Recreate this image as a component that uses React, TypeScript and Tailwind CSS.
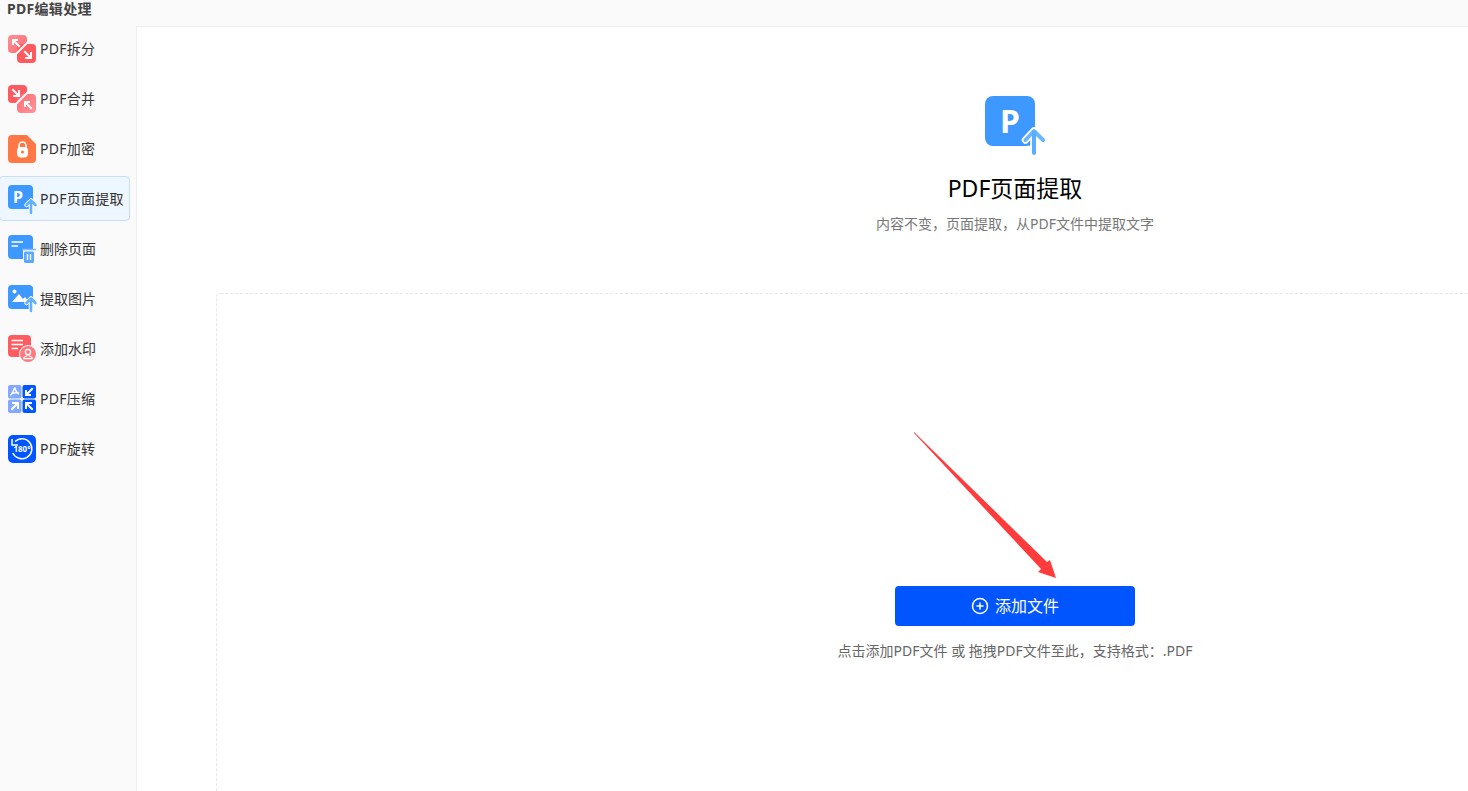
import { CirclePlus } from "lucide-react"
import type { ReactNode } from "react"

// Small corner arrow used by the split / merge / compress tiles
const CornerArrow = ({ d }: { d: string }) => (
  <path d={d} fill="none" stroke="#fff" strokeWidth="2" strokeLinecap="square" />
)

const UpArrow = ({ x, y }: { x: number; y: number }) => (
  <g transform={`translate(${x} ${y})`} fill="none" strokeLinecap="round" strokeLinejoin="round">
    <path d="M-4.5 5L0 0.5L4.5 5M0 1V13" stroke="#fff" strokeWidth="4.5" />
    <path d="M-4.5 5L0 0.5L4.5 5M0 1V13" stroke="#5fb0ff" strokeWidth="2.6" />
  </g>
)

const Svg = ({ children }: { children: ReactNode }) => (
  <svg width="28" height="28" viewBox="0 0 28 28" className="shrink-0 overflow-visible">
    {children}
  </svg>
)

const SplitIcon = () => (
  <Svg>
    <defs>
      <linearGradient id="splitA" x1="0" y1="0" x2="1" y2="1">
        <stop offset="0" stopColor="#ff8f98" />
        <stop offset="1" stopColor="#ff6a70" />
      </linearGradient>
    </defs>
    <rect x="0" y="0" width="19" height="18" rx="4" fill="url(#splitA)" />
    <rect x="9" y="9" width="19" height="19" rx="4" fill="#ff5a60" />
    <path d="M20 7L7 20" stroke="#fbfbfb" strokeWidth="2" />
    <CornerArrow d="M5 9V5H9M5.5 5.5L11 11" />
    <CornerArrow d="M23 18V23H18M22.5 22.5L17 17" />
  </Svg>
)

const MergeIcon = () => (
  <Svg>
    <defs>
      <linearGradient id="mergeA" x1="0" y1="0" x2="1" y2="1">
        <stop offset="0" stopColor="#ff6a70" />
        <stop offset="1" stopColor="#ff959c" />
      </linearGradient>
    </defs>
    <rect x="0" y="0" width="19" height="18" rx="4" fill="#ff5a60" />
    <rect x="9" y="9" width="19" height="19" rx="4" fill="url(#mergeA)" />
    <path d="M20 7L7 20" stroke="#fbfbfb" strokeWidth="2" />
    <CornerArrow d="M11 6V11H6M10.5 10.5L5 5" />
    <CornerArrow d="M17 21V17H21M17.5 17.5L23 23" />
  </Svg>
)

const LockIcon = () => (
  <Svg>
    <path d="M4 0H19L28 9V24a4 4 0 0 1-4 4H4a4 4 0 0 1-4-4V4a4 4 0 0 1 4-4z" fill="#ff7845" />
    <path d="M11 13V10.5a3.5 3.5 0 0 1 7 0V13" fill="none" stroke="#fff" strokeWidth="1.6" />
    <rect x="9" y="12" width="11" height="10.5" rx="4" fill="#fff" />
    <circle cx="14.5" cy="17" r="1.6" fill="#ff7845" />
  </Svg>
)

const PageUpIcon = () => (
  <Svg>
    <rect x="0" y="0" width="25" height="24" rx="4" fill="#3d98ff" />
    <text x="5" y="18" fontSize="16" fontWeight="700" fill="#fff" fontFamily="Noto Sans">
      P
    </text>
    <UpArrow x={23} y={15} />
  </Svg>
)

const DeleteIcon = () => (
  <Svg>
    <rect x="0" y="0" width="25" height="24" rx="4" fill="#3d98ff" />
    <path d="M3.5 7H15M3.5 11H10" stroke="#fff" strokeWidth="1.6" />
    <rect x="15" y="14" width="12" height="15" rx="2" fill="#fff" />
    <path d="M14 14.5H28" stroke="#7cbcff" strokeWidth="1.6" />
    <rect x="16" y="16.5" width="10" height="11.5" rx="1.5" fill="#5aa9ff" />
    <path d="M19.5 19V25M22.5 19V25" stroke="#fff" strokeWidth="1.4" />
  </Svg>
)

const ImageIcon = () => (
  <Svg>
    <rect x="0" y="0" width="25" height="24" rx="4" fill="#3d98ff" />
    <circle cx="6.5" cy="6.5" r="2" fill="#fff" />
    <path d="M4 17L11 9L15 14L17 12L21 17z" fill="#fff" />
    <UpArrow x={23} y={13} />
  </Svg>
)

const WatermarkIcon = () => (
  <Svg>
    <rect x="0" y="0" width="23" height="22" rx="4" fill="#ff5c62" />
    <path d="M3.5 5.5H15M3.5 9.5H15M3.5 13.5H10" stroke="#fff" strokeWidth="1.6" />
    <circle cx="20" cy="19" r="9" fill="#fff" />
    <circle cx="20" cy="19" r="8" fill="#ff7a80" />
    <circle cx="20" cy="17" r="2.6" fill="none" stroke="#fff" strokeWidth="1.3" />
    <path d="M18.8 19.5V21L15.8 22.6V23.6H24.2V22.6L21.2 21V19.5" fill="none" stroke="#fff" strokeWidth="1.1" />
  </Svg>
)

const CompressIcon = () => (
  <Svg>
    <rect x="0" y="0" width="13.5" height="13.5" rx="2" fill="#82a9ff" />
    <rect x="14.5" y="0" width="13.5" height="13.5" rx="2" fill="#0055ff" />
    <rect x="0" y="14.5" width="13.5" height="13.5" rx="2" fill="#82a9ff" />
    <rect x="14.5" y="14.5" width="13.5" height="13.5" rx="2" fill="#0055ff" />
    <path d="M6.8 2.5C5.8 5 5 8 2.5 10.5M6.8 2.5C7.5 6 9 8 11 9M3 8.5C6 7.5 8 7.5 11 8" fill="none" stroke="#fff" strokeWidth="1.4" />
    <CornerArrow d="M18 6V10H22M18.5 9.5L24 4" />
    <CornerArrow d="M5 18H10V23M9.5 18.5L4 24" />
    <CornerArrow d="M18 23V18H23M18.5 18.5L24 24" />
  </Svg>
)

const RotateIcon = () => (
  <Svg>
    <rect x="0" y="0" width="28" height="28" rx="5" fill="#0055ff" />
    <path d="M7 6.5A10 10 0 1 1 4.8 18" fill="none" stroke="#fff" strokeWidth="1.5" />
    <path d="M4 4V10H10" fill="none" stroke="#fff" strokeWidth="1.5" />
    <text x="14" y="17" textAnchor="middle" fontSize="8" fontWeight="700" fill="#fff" fontFamily="Noto Sans">
      180°
    </text>
  </Svg>
)

const menuItems = [
  { label: "PDF拆分", icon: <SplitIcon /> },
  { label: "PDF合并", icon: <MergeIcon /> },
  { label: "PDF加密", icon: <LockIcon /> },
  { label: "PDF页面提取", icon: <PageUpIcon />, active: true },
  { label: "删除页面", icon: <DeleteIcon /> },
  { label: "提取图片", icon: <ImageIcon /> },
  { label: "添加水印", icon: <WatermarkIcon /> },
  { label: "PDF压缩", icon: <CompressIcon /> },
  { label: "PDF旋转", icon: <RotateIcon /> },
]

export default function App() {
  return (
    <div
      lang="zh-CN"
      className="flex h-screen overflow-hidden bg-[#fafafa] font-['Noto_Sans','Noto_Sans_CJK_SC',sans-serif] text-[#333]"
    >
      {/* Sidebar */}
      <aside className="w-[136px] shrink-0">
        <div className="h-[24px] pl-[7px] text-sm font-bold leading-[18px] tracking-[0.3px] text-[#444]">PDF编辑处理</div>
        <nav className="flex flex-col">
          {menuItems.map((item) => (
            <div
              key={item.label}
              className={
                item.active
                  ? "mt-[2px] mb-[3px] -ml-px flex h-[45px] w-[131px] items-center gap-1 rounded-sm border border-[#c6dfff] bg-[#eef6ff] pl-[8px] text-sm"
                  : "mt-[2px] mb-[3px] -ml-px flex h-[45px] w-[131px] items-center gap-1 border border-transparent pl-[8px] text-sm"
              }
            >
              {item.icon}
              <span className={item.label.startsWith("PDF") ? "tracking-[0.25px]" : ""}>{item.label}</span>
            </div>
          ))}
        </nav>
      </aside>

      {/* Main panel, wider than the window */}
      <div className="h-full w-[1757px] shrink-0 pt-[26px]">
        <main className="flex h-[900px] flex-col items-center border-t border-l border-[#eeeeee] bg-white px-[79px] pt-[69px]">
          <svg width="60" height="60" viewBox="0 0 60 60" className="shrink-0">
            <rect x="0" y="0" width="50" height="50" rx="8" fill="#3d98ff" />
            <text x="15" y="37" fontSize="32" fontWeight="700" fill="#fff" fontFamily="Noto Sans">
              P
            </text>
            <g fill="none" strokeLinecap="round" strokeLinejoin="round">
              <path d="M40.5 44L49 35L58 44M49 36V57" stroke="#fff" strokeWidth="7.5" />
              <path d="M40.5 44L49 35L58 44" stroke="#6ab6ff" strokeWidth="4" />
              <path d="M49 36V57" stroke="#5aaeff" strokeWidth="4" />
            </g>
          </svg>
          <h1 className="mt-[15px] h-[34px] text-[23px] leading-[34px] text-black">PDF页面提取</h1>
          <p className="mt-[9px] h-5 text-sm leading-5 text-[#777]">{"内容不变\uFF0C页面提取\uFF0C从PDF文件中提取文字"}</p>

          {/* Drop zone */}
          <div className="relative mt-[59px] flex w-full flex-1 flex-col items-center rounded border border-dashed border-[#e8e8e8] pt-[292px]">
            <svg width="150" height="152" viewBox="0 0 150 152" className="absolute top-[138px] left-[697px]">
              <polygon points="0,0 133,130 136,128 142,146 124,140 127,137 0,1" fill="#ff3b3b" />
            </svg>
            <button className="flex h-10 w-[240px] items-center justify-center gap-1.5 rounded bg-[#0055ff] text-base text-white">
              <CirclePlus size={18} strokeWidth={2} />
              添加文件
            </button>
            <p className="mt-[15px] h-5 text-sm leading-5 text-[#666]">{"点击添加PDF文件 或 拖拽PDF文件至此\uFF0C支持格式\uFF1A.PDF"}</p>
          </div>
        </main>
      </div>
    </div>
  )
}
